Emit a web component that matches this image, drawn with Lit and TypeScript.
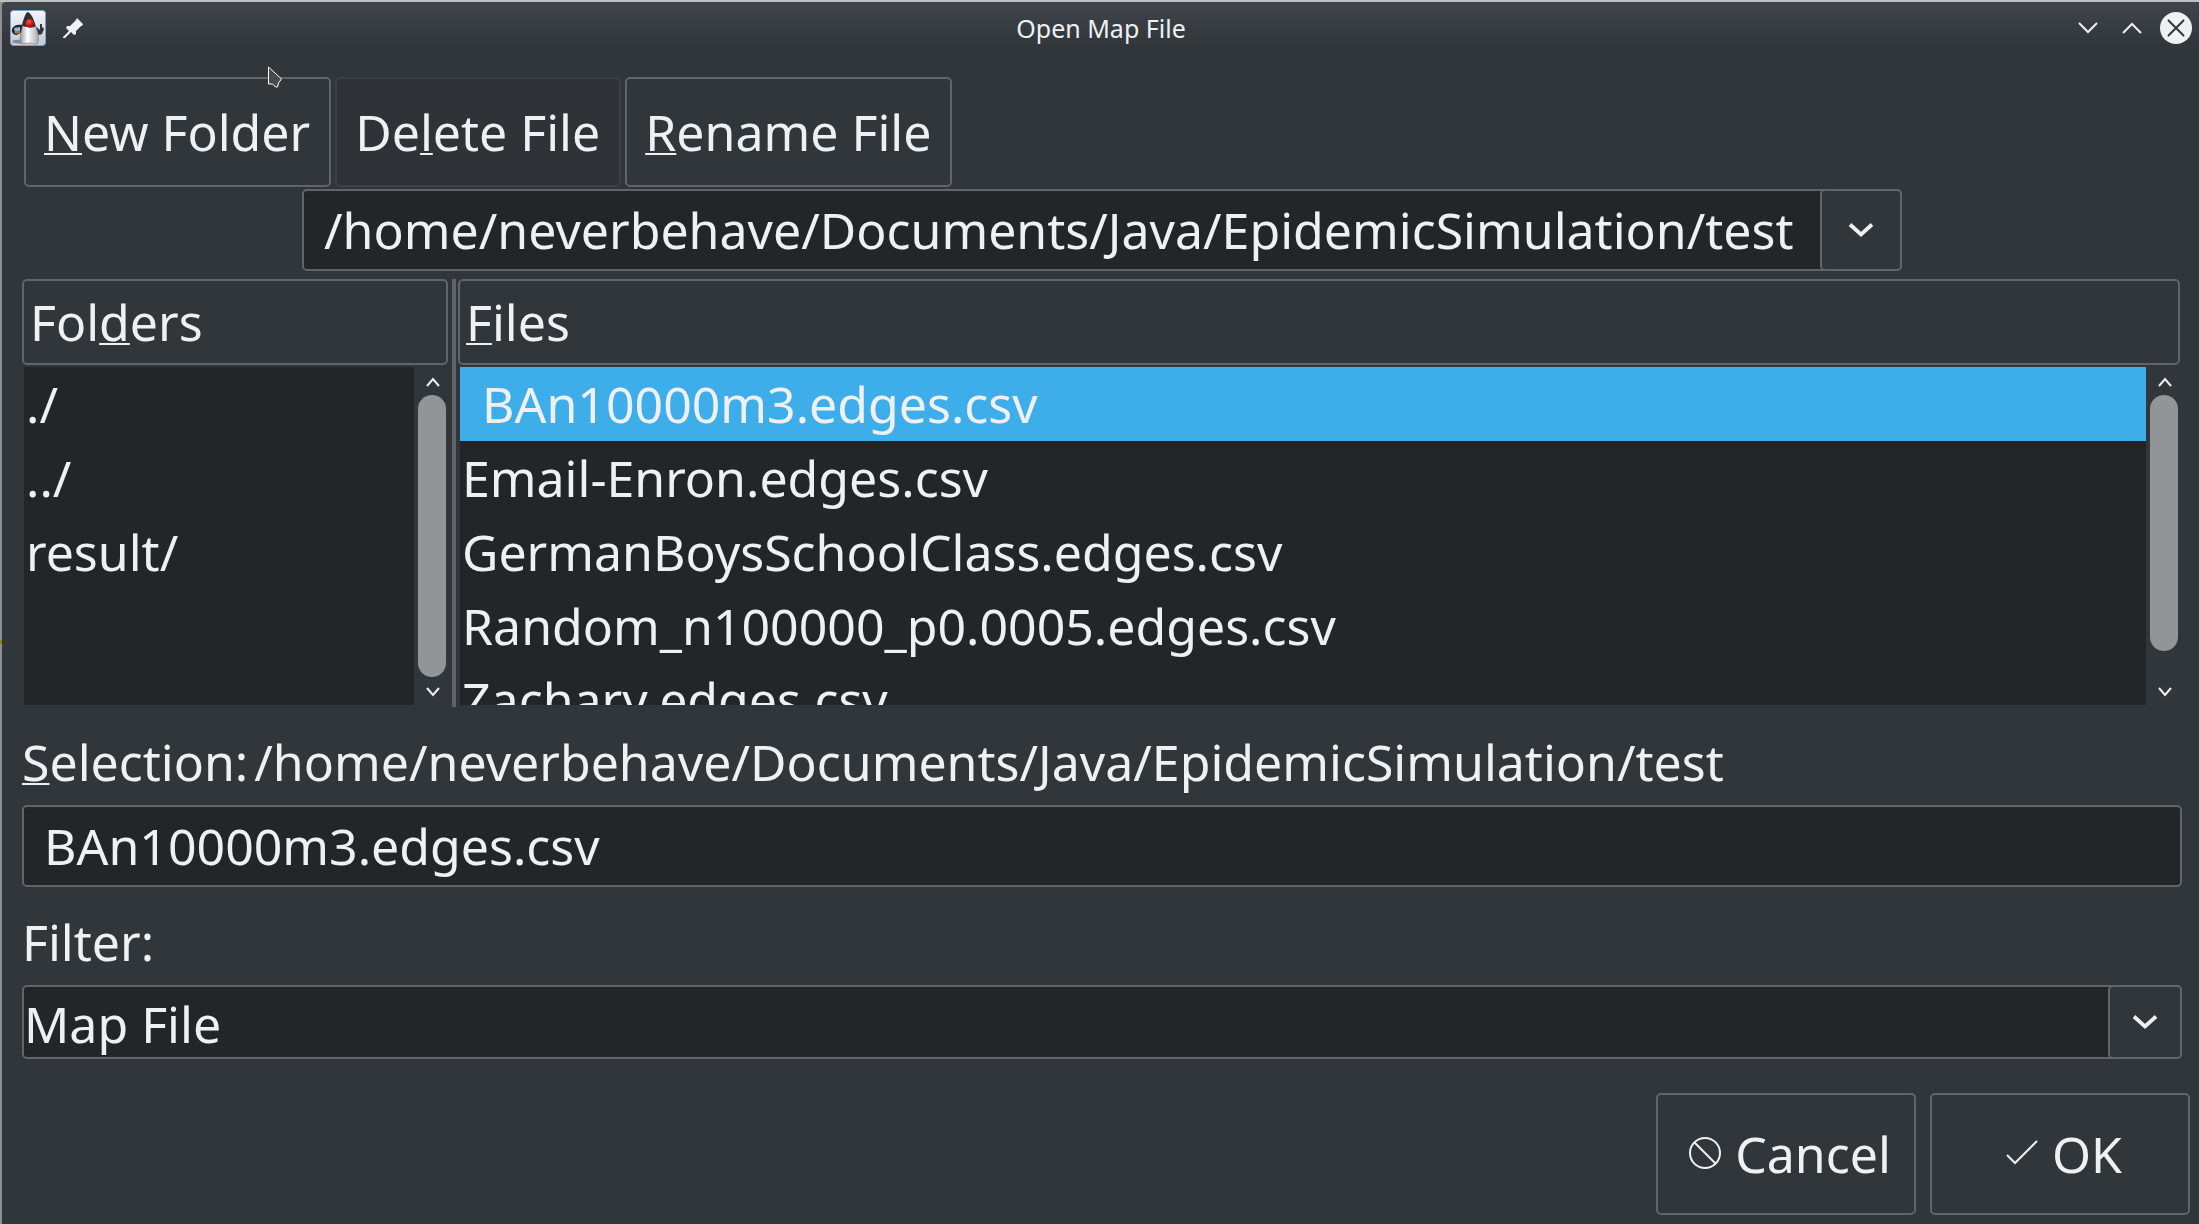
import { LitElement, html, svg, css } from "lit";
import { customElement, state } from "lit/decorators.js";

const chevron = (w: number, h: number, up = false) => html`
  <svg width=${w} height=${h} viewBox="0 0 ${w} ${h}" aria-hidden="true">
    ${svg`<path d=${up ? `M1 ${h - 1}L${w / 2} 2L${w - 1} ${h - 1}` : `M1 1L${w / 2} ${h - 2}L${w - 1} 1`}
      fill="none" stroke="currentColor" stroke-width="2" />`}
  </svg>`;

const dropArrow = html`
  <svg width="26" height="16" viewBox="0 0 26 16" aria-hidden="true">
    <path d="M2 2.500L13 12.500L24 2.500" fill="none" stroke="currentColor" stroke-width="3.800" />
  </svg>`;

@customElement("app-root")
export class AppRoot extends LitElement {
  @state() private selected = 0;

  private folders = ["./", "../", "result/"];
  private files = [
    "BAn10000m3.edges.csv",
    "Email-Enron.edges.csv",
    "GermanBoysSchoolClass.edges.csv",
    "Random_n100000_p0.0005.edges.csv",
    "Zachary.edges.csv",
  ];
  private path = "/home/neverbehave/Documents/Java/EpidemicSimulation/test";

  static styles = css`
    :host {
      display: block;
      --bg: #31363b;
      --view: #232629;
      --line: #616569;
      --text: #eff0f1;
      --accent: #3daee9;
      font-family: "Noto Sans", "Open Sans", sans-serif;
      font-size: 50px;
      line-height: 74px;
      color: var(--text);
      background: #c0c1c2;
    }
    * { box-sizing: border-box; }
    button, input, select {
      font: inherit;
      color: inherit;
      margin: 0;
      padding: 0;
      border: 0;
      background: none;
      border-radius: 0;
      outline: none;
    }
    svg { display: block; flex: none; }
    u {
      text-decoration: underline 2px;
      text-underline-offset: 2px;
      text-decoration-skip-ink: none;
    }
    .frame {
      min-height: 100vh;
      padding: 2px 0 0 2px;
      background: linear-gradient(to bottom, transparent 640px, #8a8600 640px, #8a8600 644px, transparent 644px) 0 0 / 2px 100% no-repeat,
        linear-gradient(to bottom, #c0c1c2, #c0c1c2) 0 0 / 100% 2px no-repeat, #8e9092;
    }
    .window {
      min-height: calc(100vh - 2px);
      background: linear-gradient(to bottom, #40454c, var(--bg) 44px) var(--bg);
      border-radius: 4px 0 0 0;
      display: flex;
      flex-direction: column;
    }
    .titlebar {
      display: grid;
      grid-template-columns: 1fr auto 1fr;
      align-items: center;
      height: 52px;
      padding: 0 7px 0 8px;
    }
    .titlebar h1 {
      margin: 0;
      font-size: 25px;
      font-weight: 400;
      line-height: 34px;
    }
    .left, .right { display: flex; align-items: center; }
    .left { gap: 16px; }
    .right { justify-content: flex-end; gap: 24px; }
    .right .close { margin-left: -6px; }
    .body {
      display: flex;
      flex-direction: column;
      padding: 23px 17px 0 20px;
    }
    .toolbar { display: flex; gap: 4px; padding-left: 2px; }
    .btn {
      height: 110px;
      padding: 0 19px 0 18px;
      border: 2px solid var(--line);
      border-radius: 5px;
      display: flex;
      align-items: center;
      justify-content: center;
      gap: 14px;
    }
    .btn.off { border-color: #3d4146; background: #2f3237; }
    .combo { display: grid; grid-template-columns: 1fr auto; margin-top: 2px; }
    .combo > * { grid-row: 1; }
    .combo select {
      grid-column: 1 / 3;
      appearance: none;
      min-width: 0;
      background: var(--view);
      border: 2px solid var(--line);
      border-radius: 5px;
    }
    .combo .drop {
      grid-column: 2;
      z-index: 1;
      pointer-events: none;
      display: grid;
      place-items: center;
      border: 2px solid var(--line);
      border-radius: 5px;
      background: var(--bg);
    }
    .path { align-self: center; }
    .path select { height: 82px; padding: 0 106px 0 20px; }
    .path .drop { width: 82px; height: 82px; }
    .filter { margin-top: 6px; }
    .filter select { height: 74px; padding: 0 80px 2px 0; }
    .filter .drop { width: 74px; height: 74px; }
    .panes {
      display: grid;
      grid-template-columns: 426px 8px minmax(0, 1fr);
      margin-top: 8px;
      padding-right: 2px;
      height: 428px;
    }
    .divider { width: 4px; background: var(--line); margin-left: 4px; }
    .pane { display: flex; flex-direction: column; min-width: 0; }
    .pane.wide { margin-left: 2px; }
    .head {
      height: 86px;
      padding: 0 6px;
      border: 2px solid var(--line);
      border-radius: 5px;
      line-height: 82px;
    }
    .view {
      display: grid;
      grid-template-columns: minmax(0, 1fr) 34px;
      height: 338px;
      margin: 2px 0 0 2px;
    }
    ul {
      margin: 0;
      padding: 0;
      list-style: none;
      background: var(--view);
      overflow: hidden;
    }
    li { height: 74px; padding: 0 2px; white-space: nowrap; cursor: default; }
    li.on { background: var(--accent); padding-left: 22px; }
    .scroll {
      display: grid;
      grid-template-rows: 28px minmax(0, 1fr) 28px;
      padding-left: 4px;
    }
    .scroll button { display: grid; place-items: center; padding-top: 2px; }
    .thumb { width: 28px; border-radius: 14px; background: #929597; }
    .pane.wide .thumb { margin-bottom: 26px; }
    .row { display: flex; gap: 6px; margin-top: 18px; }
    .field {
      width: 100%;
      height: 82px;
      margin-top: 6px;
      padding: 0 20px;
      background: var(--view);
      border: 2px solid var(--line);
      border-radius: 5px;
    }
    .actions { display: flex; justify-content: flex-end; gap: 14px; padding: 34px 9px 9px; }
    .actions .btn { width: 260px; height: 122px; padding: 0 10px 0 18px; }
    .pointer { position: absolute; left: 267px; top: 65px; pointer-events: none; }
  `;

  private scrollbar() {
    return html`<div class="scroll">
      <button aria-label="Scroll up">${chevron(14, 10, true)}</button>
      <div class="thumb"></div>
      <button aria-label="Scroll down">${chevron(14, 10)}</button>
    </div>`;
  }

  render() {
    return html`<div class="frame"><div class="window">
      <header class="titlebar">
        <div class="left">
          <svg width="36" height="36" viewBox="0 0 36 36" role="img" aria-label="Java">
            <defs>
              <linearGradient id="tile" x1="0" y1="0" x2="0" y2="1">
                <stop offset="0" stop-color="#f4f5fa" /><stop offset="1" stop-color="#c3c7da" />
              </linearGradient>
              <radialGradient id="nose" cx=".4" cy=".3" r=".7">
                <stop offset="0" stop-color="#f4564a" /><stop offset=".5" stop-color="#d8201c" /><stop offset="1" stop-color="#8a0d0d" />
              </radialGradient>
              <linearGradient id="belly" x1="0" y1="0" x2="1" y2="0">
                <stop offset="0" stop-color="#9a9a9a" /><stop offset=".4" stop-color="#ffffff" /><stop offset="1" stop-color="#a8a8a8" />
              </linearGradient>
            </defs>
            <rect x=".5" y=".5" width="35" height="35" rx="3" fill="url(#tile)" stroke="#7fa3c4" />
            <ellipse cx="12" cy="31.500" rx="10" ry="2" fill="#85889a" />
            <path d="M13 15C9 14 3 15 2 19c-1 4 2 6 5 6l5-3z" fill="#262829" />
            <path d="M4 18l6-1 0 4-5 1z" fill="#8fb9dc" />
            <path d="M4 22l6-1v2l-4 1z" fill="#a87a3c" />
            <path d="M25 16l5 4 0-6 2 0 0 4 1-1 1 2-2 5-3 1-4-4z" fill="#333536" />
            <path d="M13 15C11 21 9 29 11 33c2 2 4 0 8 0s6 2 8 1c3-3 1-13-2-19z" fill="url(#belly)" stroke="#6a6a6a" stroke-width=".5" />
            <path d="M17 2C20 2 24 8 25.500 16C24 18 22 17 19 17C16 17 14 17 12 15C13 10 15 5 17 2z" fill="#2c302f" />
            <circle cx="19.800" cy="13.400" r="4.400" fill="url(#nose)" />
          </svg>
          <svg width="22" height="22" viewBox="0 0 22 22" aria-hidden="true">
            <path d="M15 1l6 6-1 2-1 0-5 5 0 3-2 1-3-3-6 6-2 0 0-1 6-6-3-3 1-2 3 0 6-6z" fill="#eff0f1" />
          </svg>
        </div>
        <h1>Open Map File</h1>
        <div class="right">
          <button aria-label="Minimize">${chevron(20, 12)}</button>
          <button aria-label="Maximize">${chevron(20, 12, true)}</button>
          <button class="close" aria-label="Close">
            <svg width="32" height="32" viewBox="0 0 32 32">
              <circle cx="16" cy="16" r="16" fill="#eff0f1" />
              <path d="M8 8l16 16M24 8L8 24" stroke="#31363b" stroke-width="2" />
            </svg>
          </button>
        </div>
      </header>
      <main class="body">
        <div class="toolbar">
          <button class="btn"><span><u>N</u>ew Folder</span></button>
          <button class="btn off"><span>De<u>l</u>ete File</span></button>
          <button class="btn"><span><u>R</u>ename File</span></button>
        </div>
        <div class="combo path">
          <select aria-label="Directory"><option>${this.path}</option></select>
          <span class="drop">${dropArrow}</span>
        </div>
        <div class="panes">
          <section class="pane">
            <div class="head" id="folders">Fol<u>d</u>ers</div>
            <div class="view">
              <ul role="listbox" aria-labelledby="folders">
                ${this.folders.map((f) => html`<li role="option">${f}</li>`)}
              </ul>
              ${this.scrollbar()}
            </div>
          </section>
          <div class="divider"></div>
          <section class="pane wide">
            <div class="head" id="files"><u>F</u>iles</div>
            <div class="view">
              <ul role="listbox" aria-labelledby="files">
                ${this.files.map((f, i) => html`<li role="option" class=${i === this.selected ? "on" : ""}
                  aria-selected=${i === this.selected} @click=${() => (this.selected = i)}>${f}</li>`)}
              </ul>
              ${this.scrollbar()}
            </div>
          </section>
        </div>
        <div class="row"><label for="selection"><u>S</u>election:</label><span>${this.path}</span></div>
        <input class="field" id="selection" type="text" .value=${this.files[this.selected]} />
        <div class="row"><label for="filter">Filter:</label></div>
        <div class="combo filter">
          <select id="filter"><option>Map File</option></select>
          <span class="drop">${dropArrow}</span>
        </div>
      </main>
      <footer class="actions">
        <button class="btn">
          <svg width="32" height="34" viewBox="0 0 32 34" aria-hidden="true">
            <circle cx="16" cy="16" r="15" fill="none" stroke="#eff0f1" stroke-width="2" />
            <path d="M5 5l22 22" stroke="#eff0f1" stroke-width="2" />
          </svg>
          <span>Cancel</span>
        </button>
        <button class="btn">
          <svg width="32" height="34" viewBox="0 0 32 34" aria-hidden="true">
            <path d="M1 18l8 8L31 4" fill="none" stroke="#eff0f1" stroke-width="2" />
          </svg>
          <span>OK</span>
        </button>
      </footer>
      <svg class="pointer" width="16" height="24" viewBox="0 0 16 24" aria-hidden="true">
        <path d="M1.500 2v17h4l3 3h2l1-4 3-4z" fill="#4a4a4a" stroke="#fff" stroke-width="1" />
      </svg>
    </div></div>`;
  }
}
